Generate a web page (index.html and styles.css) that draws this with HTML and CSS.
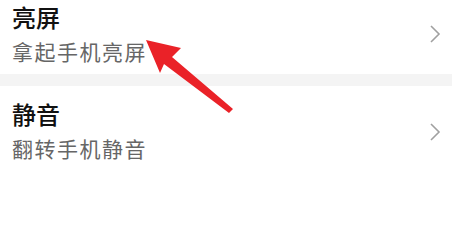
FILE: index.html
```html
<!DOCTYPE html>
<html>
<head>
  <meta charset="utf-8">
  <title>亮屏 静音</title>
  <link rel="stylesheet" href="styles.css">
</head>
<body>
  <div class="list">
    <div class="item first">
      <div class="text">
        <div class="title">亮屏</div>
        <div class="sub">拿起手机亮屏</div>
      </div>
      <svg class="chev" width="12" height="18" viewBox="0 0 12 18"><path d="M2 1 L10 9 L2 17" fill="none" stroke="#a0a0a0" stroke-width="1.6"/></svg>
    </div>
    <div class="gap"></div>
    <div class="item second">
      <div class="text">
        <div class="title">静音</div>
        <div class="sub">翻转手机静音</div>
      </div>
      <svg class="chev" width="12" height="18" viewBox="0 0 12 18"><path d="M2 1 L10 9 L2 17" fill="none" stroke="#a0a0a0" stroke-width="1.6"/></svg>
    </div>
  </div>
  <!-- red arrow drawn on top -->
  <svg class="arrow" width="452" height="228" viewBox="0 0 452 228">
    <polygon points="146,40 181,48 172,57 233,109 229,113 164,64 160,73" fill="#ea2228"/>
  </svg>
</body>
</html>
```

FILE: styles.css
```css
body {
  margin: 0;
  background-color: #fff;
  font-family: "Noto Sans CJK SC", sans-serif;
}

.list {
  width: 452px;
}

.item {
  display: flex;
  align-items: center;
  justify-content: space-between;
  padding-left: 12px;
  padding-right: 11px;
}

.first {
  height: 74px;
  box-sizing: border-box;
  padding-top: 2px;
  padding-bottom: 8px;
}

.second {
  padding-top: 14px;
}

.title {
  font-size: 24px;
  line-height: 28px;
  color: #111;
  font-weight: 500;
}

.sub {
  font-size: 21px;
  line-height: 30px;
  margin-top: 5px;
  color: #666;
  letter-spacing: 1.5px;
}

.gap {
  height: 12px;
  background-color: #f4f4f4;
}

.arrow {
  position: absolute;
  left: 0;
  top: 0;
}
```
